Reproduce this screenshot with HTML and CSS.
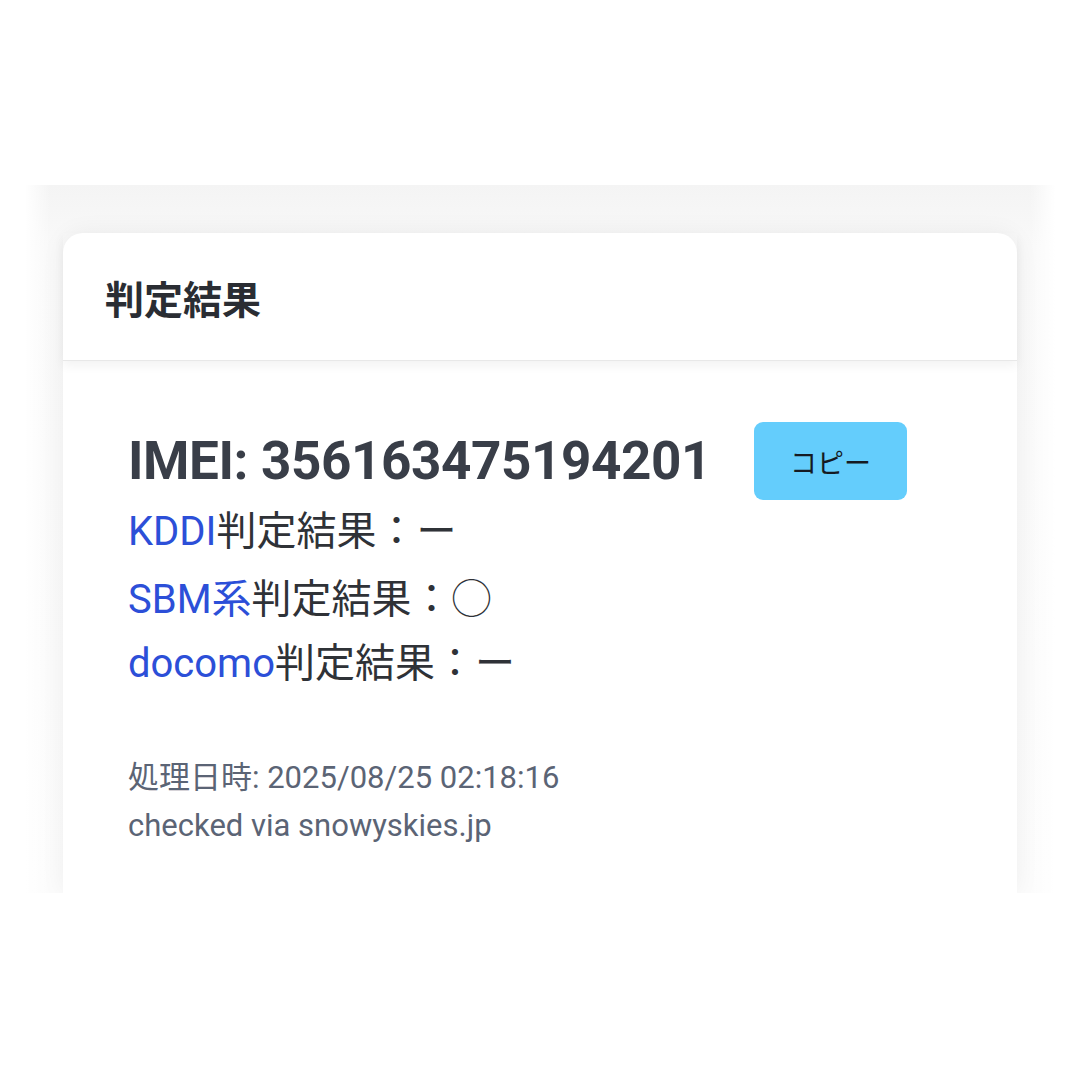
FILE: index.html
```html
<!DOCTYPE html>
<html lang="ja">
<head>
    <meta charset="UTF-8">
    <meta name="viewport" content="width=device-width, initial-scale=1.0">
    <title>判定結果</title>
    <link rel="stylesheet" href="styles.css">
</head>
<body>

<div class="frame">
    <div class="card">
        <div class="card-header">
            <h1>判定結果</h1>
        </div>
        <div class="card-body">
            <div class="imei-row">
                <h2 class="imei">IMEI: 356163475194201</h2>
                <button class="copy-btn">コピー</button>
            </div>

            <div class="results">
                <p><span class="carrier">KDDI</span>判定結果：ー</p>
                <p><span class="carrier">SBM系</span>判定結果：<span class="mark">◯</span></p>
                <p><span class="carrier">docomo</span>判定結果：ー</p>
            </div>

            <div class="meta">
                <p>処理日時: 2025/08/25 02:18:16</p>
                <p>checked via snowyskies.jp</p>
            </div>
        </div>
    </div>
</div>

</body>
</html>
```

FILE: styles.css
```css
body {
    font-family: Roboto, "Noto Sans CJK JP", sans-serif;
    background-color: #fff;
    margin: 0;
    padding: 0;
}

.frame {
    margin: 185px 0 0;
    height: 708px;
    box-sizing: border-box;
    padding: 48px 63px 0;
    overflow: hidden;
    background:
        linear-gradient(to right, #fff, #fff 25px, rgba(255, 255, 255, 0) 50px, rgba(255, 255, 255, 0) calc(100% - 50px), #fff calc(100% - 25px), #fff),
        linear-gradient(to bottom, #f4f4f4, #f9f9f9 60px, #fcfcfc);
}

.card {
    background-color: #fff;
    border-radius: 20px 20px 0 0;
    box-shadow: 0 0 24px rgba(0, 0, 0, 0.06);
    height: 100%;
}

.card-header {
    height: 127px;
    display: flex;
    align-items: center;
    padding-left: 42px;
    border-bottom: 1px solid #e8e8e8;
    box-shadow: 0 5px 10px rgba(0, 0, 0, 0.05);
    position: relative;
}

.card-header h1 {
    margin: 0;
    font-size: 39px;
    font-weight: 700;
    color: #2a2d33;
}

.card-body {
    padding: 61px 65px 0;
}

.imei-row {
    display: flex;
    align-items: center;
}

.imei {
    margin: 0;
    font-size: 53px;
    font-weight: 700;
    color: #393e48;
    letter-spacing: -0.4px;
}

.copy-btn {
    margin-left: 43px;
    width: 153px;
    height: 78px;
    border: none;
    border-radius: 9px;
    background-color: #64cdfc;
    color: #151a22;
    font-family: Roboto, "Noto Sans CJK JP", sans-serif;
    font-size: 27px;
    cursor: pointer;
}

.results p {
    margin: 0;
    font-size: 40px;
    line-height: 64px;
    color: #2f3237;
}

.carrier {
    color: #2c4fd8;
}

.mark {
    font-family: "Noto Sans CJK JP", sans-serif;
    font-weight: 400;
}

.meta {
    margin-top: 58px;
}

.meta p {
    margin: 0;
    font-size: 31px;
    line-height: 48px;
    color: #5b6475;
}
```
